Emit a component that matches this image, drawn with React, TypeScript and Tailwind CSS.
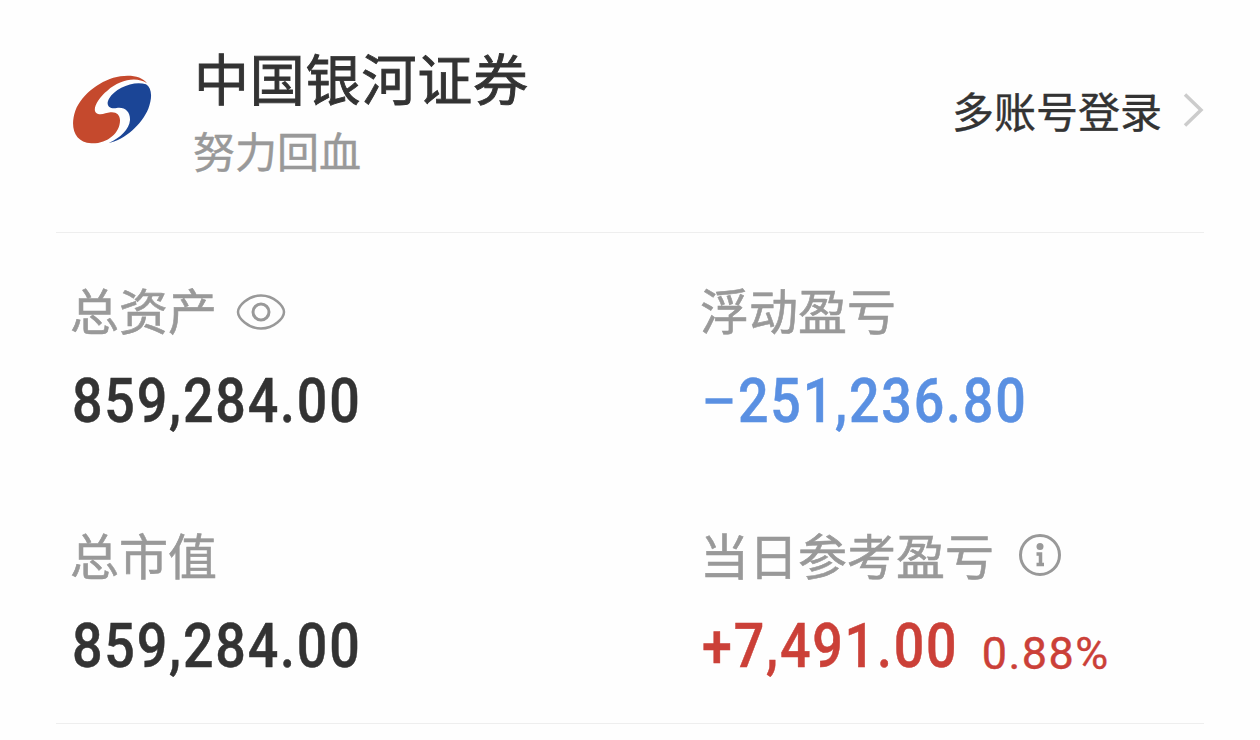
import type { ReactNode } from "react";

interface StatProps {
  label: string;
  icon?: ReactNode;
  children: ReactNode;
}

export default function App() {
  return (
    <div className="h-[740px] w-[1260px] overflow-hidden bg-[#fefefe] px-14 font-['Noto_Sans_CJK_SC',sans-serif] text-[#333333]">
      {/* Account header */}
      <header className="flex h-[233px] justify-between border-b border-[#eeeeee]">
        <div className="flex pl-4">
          <BrokerLogo />
          <div className="ml-[42px] pt-[46px] whitespace-nowrap">
            <h1 className="text-[55px] leading-[60px] tracking-[0.8px] [-webkit-text-stroke:0.9px_#333333]">
              中国银河证券
            </h1>
            <p className="-ml-px mt-[19px] text-[42px] leading-[50px] text-[#999999] [-webkit-text-stroke:0.5px_#999999]">
              努力回血
            </p>
          </div>
        </div>

        <button type="button" className="mt-[85px] flex h-[50px] items-center">
          <span className="text-[42px] leading-[50px] whitespace-nowrap [-webkit-text-stroke:0.4px_#333333]">
            多账号登录
          </span>
          <svg className="ml-[20px] h-[36px] w-[22px]" viewBox="0 0 22 36" fill="none">
            <path d="M3 2.5L19 18L3 33.5" stroke="#cccccc" strokeWidth="3.5" />
          </svg>
        </button>
      </header>

      {/* Asset figures */}
      <main className="grid h-[491px] grid-cols-[630px_1fr] grid-rows-[245px_245px] border-b border-[#eeeeee] pl-[14px]">
        <Stat label="总资产" icon={<EyeIcon />}>
          <Amount value="859,284.00" />
        </Stat>
        <Stat label="浮动盈亏">
          <span className="flex text-[#5a90e2]">
            <svg className="mr-[3px] ml-[5px] h-[70px] w-[28px]" viewBox="0 0 28 70">
              <path d="M0.500 35H27.500" stroke="currentColor" strokeWidth="5.500" />
            </svg>
            <Amount value="251,236.80" />
          </span>
        </Stat>
        <Stat label="总市值">
          <Amount value="859,284.00" />
        </Stat>
        <Stat label="当日参考盈亏" icon={<InfoIcon />}>
          <span className="flex text-[#cb4038]">
            <Amount value="+7,491.00" />
            <span className="-ml-[16px] mt-[10px] font-[Roboto,sans-serif] text-[45px] leading-[66px] tracking-[1.4px] [-webkit-text-stroke:0.4px_#cb4038]">
              0.88%
            </span>
          </span>
        </Stat>
      </main>
    </div>
  );
}

function Stat({ label, icon, children }: StatProps) {
  return (
    <section className="pt-[46px]">
      <div className="flex h-[60px] items-center whitespace-nowrap text-[#999999]">
        <span className="text-[49px] leading-[60px] [-webkit-text-stroke:0.6px_#999999]">
          {label}
        </span>
        {icon}
      </div>
      <div className="mt-[27px] h-[70px]">{children}</div>
    </section>
  );
}

/** Large figure in condensed, evenly spaced digits */
function Amount({ value }: { value: string }) {
  return (
    <span className="ml-[2px] inline-block origin-left scale-x-[0.867] font-[Roboto,sans-serif] text-[62px] leading-[70px] font-medium tracking-[2.1px] whitespace-nowrap [-webkit-text-stroke:0.5px_currentColor]">
      {value}
    </span>
  );
}

function BrokerLogo() {
  return (
    <svg className="mt-[75px] h-[70px] w-[80px]" viewBox="36 44 240 210">
      <path
        fill="#c5492d"
        d="M261 69C247 49 215 43 181 48C125 56 66 101 46 151C29 200 43 247 94 249C141 251 181 218 180 179C179 163 169 154 151 156C137 158 119 167 108 157C96 146 116 111 142 91C178 59 228 47 261 69Z"
      />
      <path
        fill="#1b4596"
        d="M258 72C220 60 165 84 147 115C136 135 148 147 170 143C195 139 211 155 210 179C208 207 181 233 146 248C196 237 245 192 265 145C279 107 274 82 258 72Z"
      />
    </svg>
  );
}

function EyeIcon() {
  return (
    <svg className="mt-[5px] ml-[19px] h-[36px] w-[50px]" viewBox="0 0 50 36" fill="none" stroke="#999999">
      <path
        d="M2 18C2 12 12 1.500 25 1.500S48 12 48 18S38 34.500 25 34.500S2 24 2 18Z"
        strokeWidth="2.500"
      />
      <circle cx="25" cy="18" r="8" strokeWidth="3" />
    </svg>
  );
}

function InfoIcon() {
  return (
    <svg className="mt-[2px] ml-[24px] h-[44px] w-[44px]" viewBox="0 0 44 44" fill="none">
      <circle cx="22" cy="22" r="19.500" stroke="#999999" strokeWidth="3" />
      <circle cx="22" cy="13.500" r="3.500" fill="#999999" />
      <path d="M18.500 21H22.500V31M18.500 31.500H26" stroke="#999999" strokeWidth="3.500" />
    </svg>
  );
}
